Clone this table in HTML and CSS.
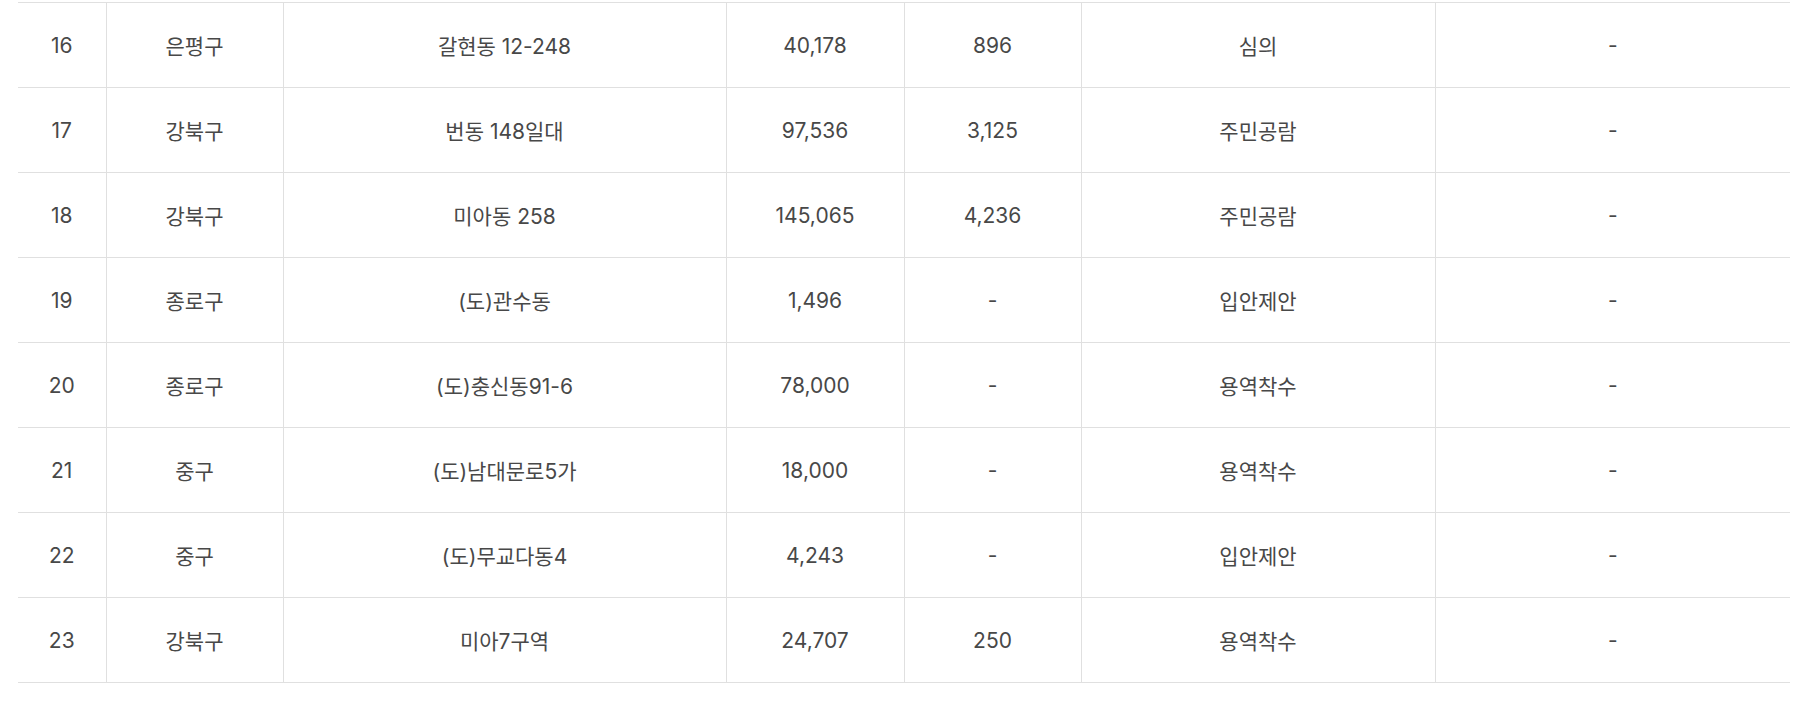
FILE: index.html
```html
<!DOCTYPE html>
<html lang="ko">
<head>
<meta charset="utf-8">
<title>목록</title>
<link rel="stylesheet" href="styles.css">
</head>
<body>
<div class="wrap">
<table class="list">
<colgroup>
<col class="c-no"><col class="c-gu"><col class="c-loc"><col class="c-area"><col class="c-units"><col class="c-stage"><col class="c-note">
</colgroup>
<tbody>
<tr><td>16</td><td>은평구</td><td>갈현동 12-248</td><td>40,178</td><td>896</td><td>심의</td><td>-</td></tr>
<tr><td>17</td><td>강북구</td><td>번동 148일대</td><td>97,536</td><td>3,125</td><td>주민공람</td><td>-</td></tr>
<tr><td>18</td><td>강북구</td><td>미아동 258</td><td>145,065</td><td>4,236</td><td>주민공람</td><td>-</td></tr>
<tr><td>19</td><td>종로구</td><td>(도)관수동</td><td>1,496</td><td>-</td><td>입안제안</td><td>-</td></tr>
<tr><td>20</td><td>종로구</td><td>(도)충신동91-6</td><td>78,000</td><td>-</td><td>용역착수</td><td>-</td></tr>
<tr><td>21</td><td>중구</td><td>(도)남대문로5가</td><td>18,000</td><td>-</td><td>용역착수</td><td>-</td></tr>
<tr><td>22</td><td>중구</td><td>(도)무교다동4</td><td>4,243</td><td>-</td><td>입안제안</td><td>-</td></tr>
<tr><td>23</td><td>강북구</td><td>미아7구역</td><td>24,707</td><td>250</td><td>용역착수</td><td>-</td></tr>
</tbody>
</table>
</div>
</body>
</html>
```

FILE: styles.css
```css
html, body {
  margin: 0;
  padding: 0;
  background: #fff;
}

.wrap {
  padding: 2px 0 0 18px;
}

.list {
  width: 1772px;
  table-layout: fixed;
  border-collapse: collapse;
  font-family: Inter, "Noto Sans CJK KR", sans-serif;
  font-size: 21px;
  color: #484848;
}

.c-no { width: 88px; }
.c-gu { width: 177px; }
.c-loc { width: 443px; }
.c-area { width: 178px; }
.c-units { width: 177px; }
.c-stage { width: 354px; }
.c-note { width: 355px; }

.list tr {
  border-top: 1px solid #e0e0e0;
  border-bottom: 1px solid #e0e0e0;
}

.list td {
  height: 84px;
  padding: 0;
  text-align: center;
  vertical-align: middle;
  border-left: 1px solid #e0e0e0;
}

.list td:first-child {
  border-left: none;
}
```
